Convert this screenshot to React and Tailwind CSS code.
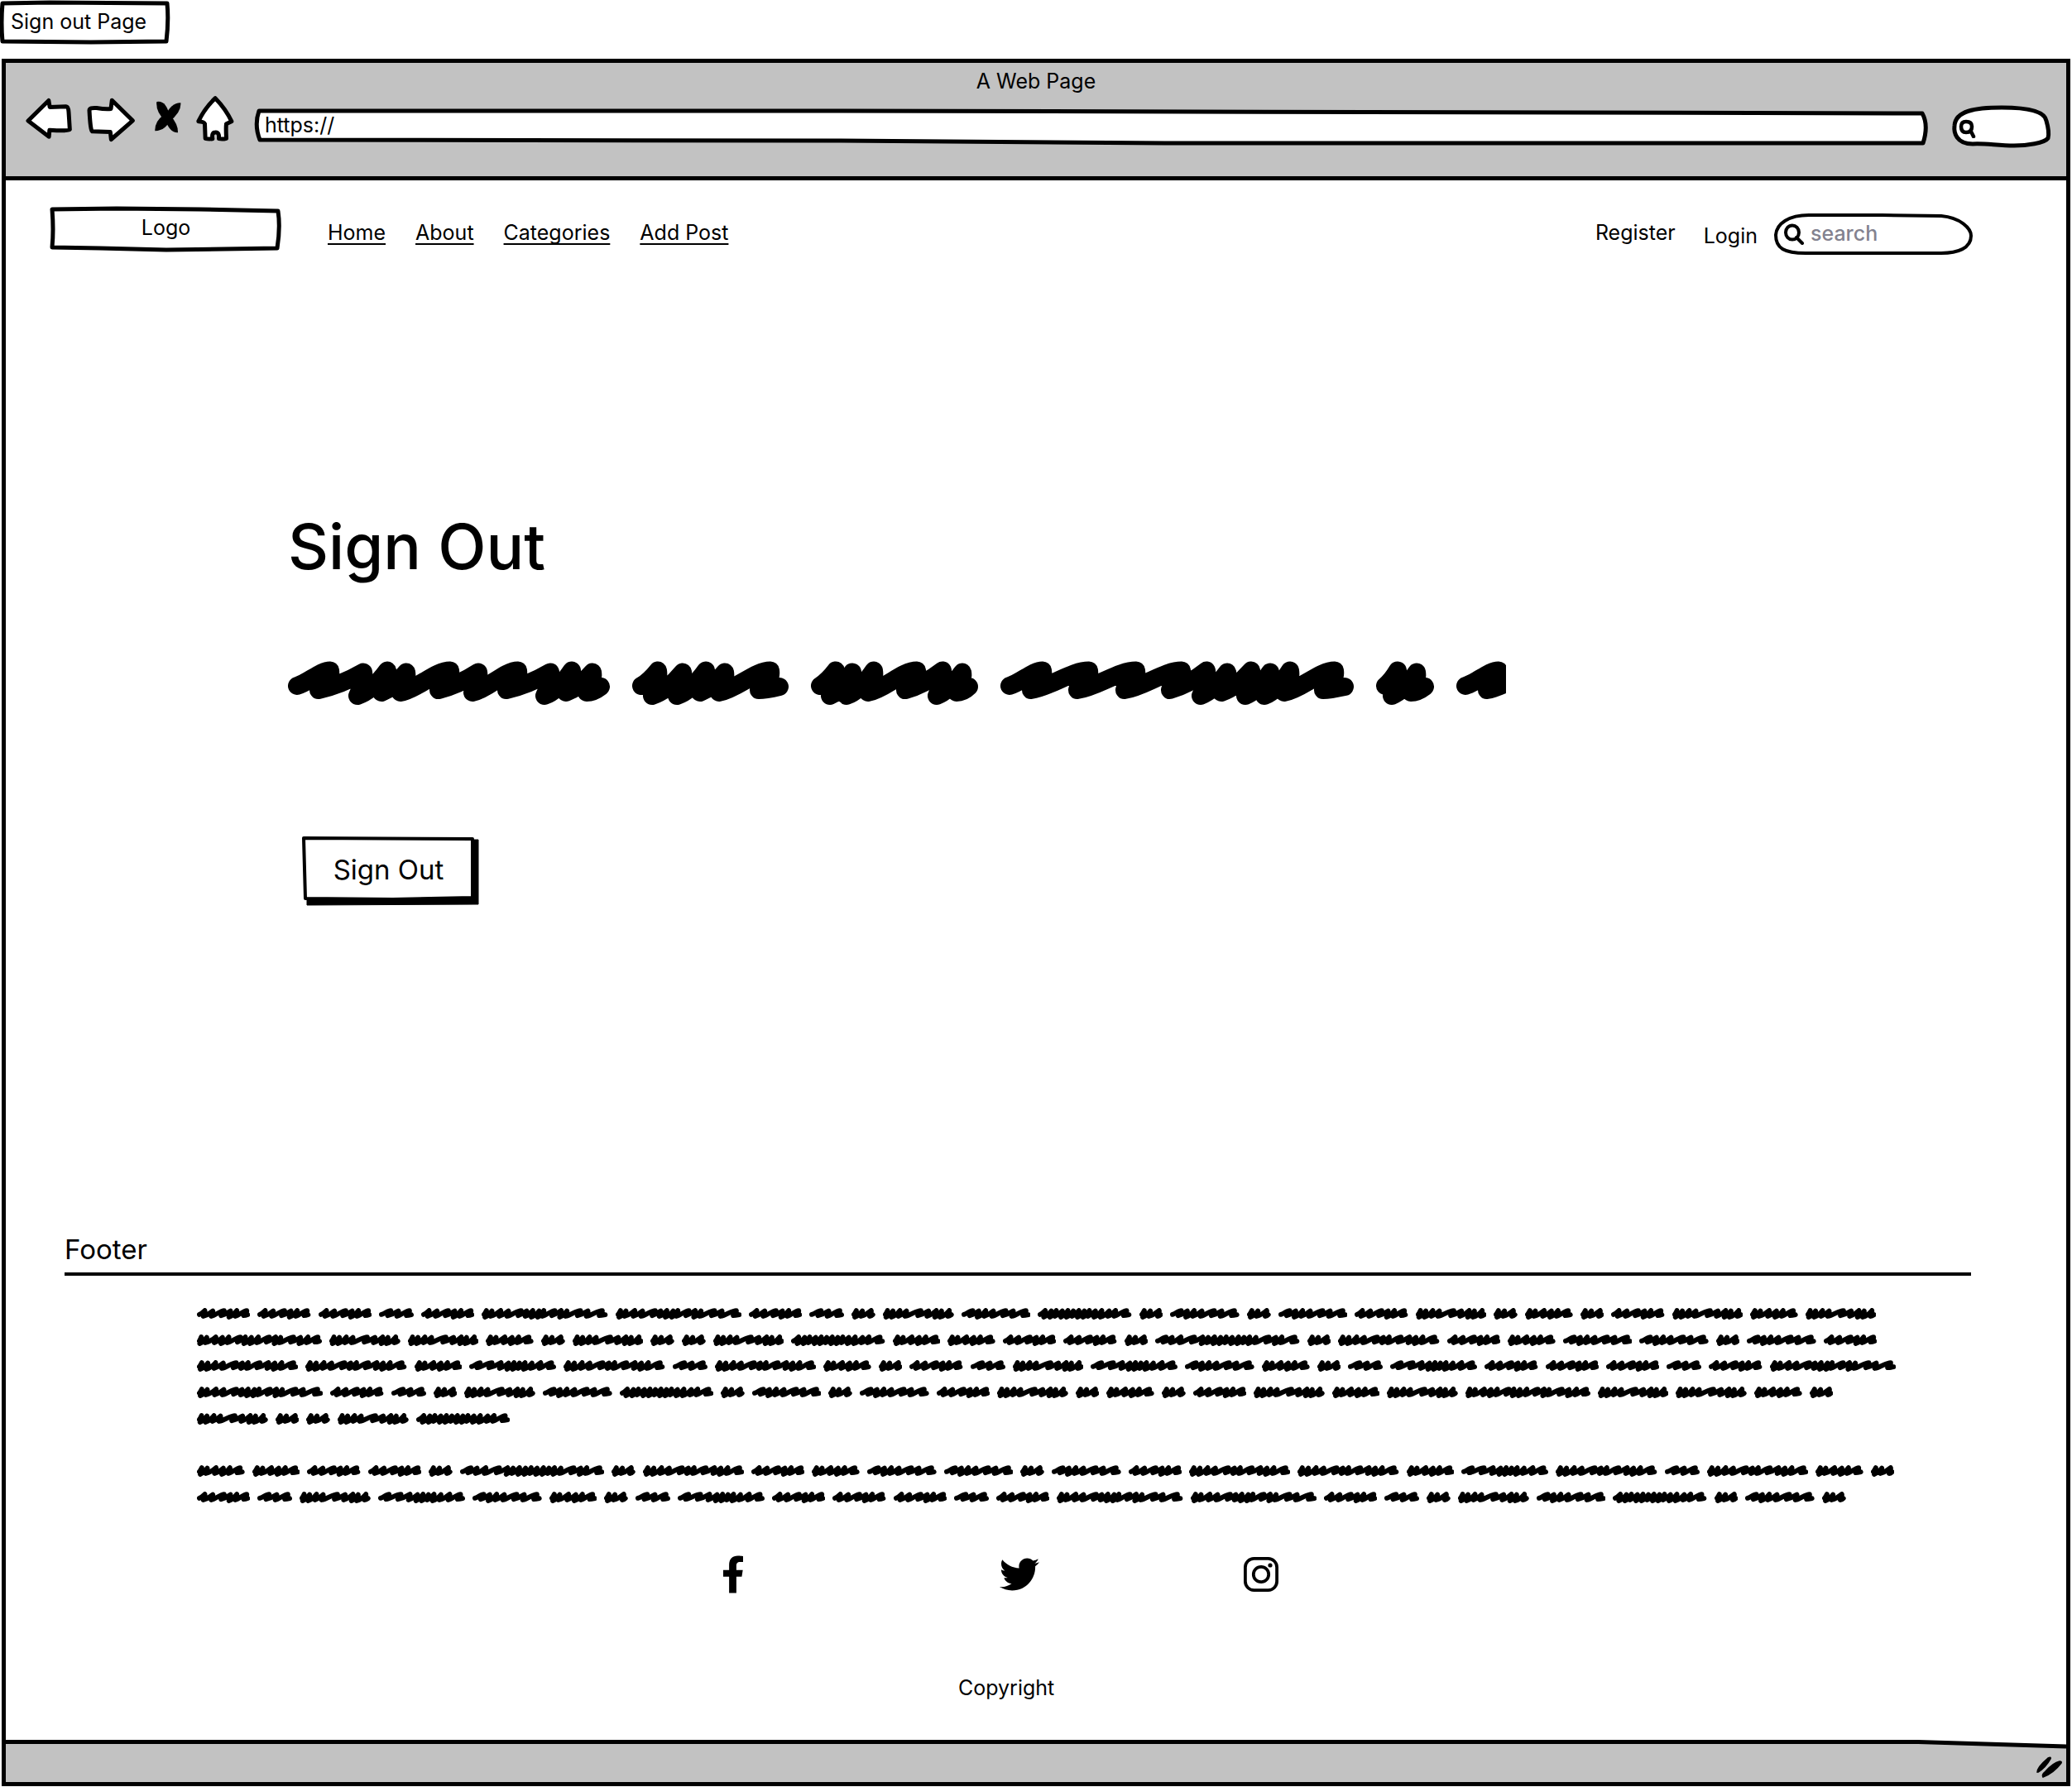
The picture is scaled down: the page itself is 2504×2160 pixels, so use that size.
import React from "react";
import { FaFacebookF, FaTwitter } from "react-icons/fa";

/* ---------- scribbled placeholder words ---------- */

// Horizontal positions of the pen's peaks within each word.
const SMALL = {
  A: [193, [31, 60, 101, 124, 147, 183]],
  B: [126, [45, 73, 113]],
  C: [457, [20, 40, 72, 100, 146, 166, 188, 211, 228, 268, 291, 312, 361, 388, 440]],
  D: [86, [20, 42, 74]],
  E: [257, [19, 39, 64, 88, 140, 168, 196, 215, 243]],
  F: [251, [43, 65, 90, 118, 163, 190, 236]],
  G: [340, [30, 52, 70, 92, 112, 132, 152, 172, 190, 212, 235, 262, 285, 325]],
  H: [173, [20, 40, 72, 98, 122, 159]],
  J: [453, [18, 38, 71, 95, 118, 160, 178, 200, 225, 265, 288, 306, 353, 378, 405, 441]],
  K: [523, [42, 64, 96, 145, 175, 195, 218, 240, 260, 282, 305, 325, 345, 368, 415, 440, 462, 509]],
  L: [367, [20, 42, 70, 98, 145, 167, 188, 231, 262, 285, 310, 353]],
  M: [315, [42, 85, 118, 145, 165, 185, 205, 230, 262, 301]],
};

const BIG = [
  [389, [54, 94, 123, 146, 199, 233, 281, 320, 346, 371]],
  [189, [34, 64, 92, 115, 170]],
  [202, [33, 53, 79, 131, 162, 186]],
  [427, [54, 110, 167, 222, 252, 277, 306, 329, 353, 407]],
  [70, [29, 52]],
  [120, [54, 105]],
];

const ROWS = [
  "AAABACCABDEFGDFDFAEDHDAEHE",
  "JEEHDEDDEGHHAADKDLAHFFDFA",
  "LLHMLBLHDABEMFHDBMAAABAC",
  "CABDEFGDFDFAEDHDAEHEJEEHD",
  "EDDEG",
  "",
  "HHAADKDLAHFFDFALLHMLBLHD",
  "ABEMFHDBMAAABACCABDEFGDFD",
];

function wordPath(width, peaks, k) {
  const r = 11 * k;
  const top = 11.5 * k;
  let x = r;
  let y = 30 * k;
  let d = `M${x} ${y}`;
  peaks.forEach((peak, i) => {
    const px = Math.min(peak, width - r) - 3 * k;
    const before = peak - (i > 0 ? peaks[i - 1] : 0);
    const after = i + 1 < peaks.length ? peaks[i + 1] - peak : 99;
    const steep = before < 42 * k;
    const tight = after < 36 * k;
    const vx = Math.max(px - (steep ? 7 : 14) * k, r);
    const vy = (steep && tight && i % 3 !== 2 ? 42 : steep ? 38 : 35) * k;
    const dx = px - x;
    if (steep) {
      d += ` Q${x + dx * 0.5} ${y - 6 * k} ${px} ${top + (i % 2) * 2 * k}`;
    } else {
      d += ` C${x + dx * 0.35} ${y - 4 * k} ${px - dx * 0.3} ${top} ${px} ${top}`;
    }
    d += ` Q${px + 2 * k} ${top + 12 * k} ${vx} ${vy}`;
    x = vx;
    y = vy;
  });
  d += ` Q${x + 8 * k} ${y} ${width - r} ${31 * k}`;
  return d;
}

function Word({ width, peaks, k, scale, className }) {
  return (
    <svg
      className={className}
      width={width / scale}
      height={(54 * k) / scale}
      viewBox={`0 0 ${width} ${54 * k}`}
      fill="none"
      stroke="black"
      strokeWidth={22 * k}
      strokeLinecap="round"
      strokeLinejoin="round"
      aria-hidden="true"
    >
      <path d={wordPath(width, peaks, k)} />
    </svg>
  );
}

/* ---------- hand-drawn frame behind a box ---------- */

function Frame({ w, h, d, fill = "white", stroke = 5 }) {
  return (
    <svg
      className="pointer-events-none absolute inset-0 -z-10 size-full overflow-visible"
      viewBox={`0 0 ${w} ${h}`}
      preserveAspectRatio="none"
      aria-hidden="true"
    >
      <path d={d} fill={fill} stroke="black" strokeWidth={stroke} strokeLinejoin="round" vectorEffect="non-scaling-stroke" />
    </svg>
  );
}

/* ---------- browser toolbar icons ---------- */

function Outline({ box, className, d }) {
  return (
    <svg viewBox={box} className={className} fill="white" stroke="black" strokeWidth="15" strokeLinejoin="round" aria-hidden="true">
      <path d={d} />
    </svg>
  );
}

function Chrome() {
  return (
    <header className="flex h-[142px] flex-col border-b-[5px] border-black bg-[#c2c2c2]">
      <p className="pt-1 text-center text-[25px] leading-9">A Web Page</p>
      <div className="flex items-start pr-[18px] pl-6">
        <button type="button" aria-label="Back" className="mt-[2px]">
          <Outline
            box="93 352 169 153"
            className="h-[51px] w-14"
            d="M102 436 L177 362 L181 386 L240 384 Q249 385 250 405 L254 468 Q252 474 180 470 L178 494 Z"
          />
        </button>
        <button type="button" aria-label="Forward" className="mt-[2px] ml-[18px]">
          <Outline
            box="315 352 174 161"
            className="h-[54px] w-[58px]"
            d="M324 398 Q324 387 350 389 Q385 395 402 392 L406 361 L481 435 L403 503 L400 476 L334 474 Q328 472 324 398 Z"
          />
        </button>
        <button type="button" aria-label="Stop" className="mt-[6px] ml-6">
          <svg viewBox="563 364 97 118" className="h-[39px] w-8" aria-hidden="true">
            <path d="M600 436 Q566 402 570 367 Q606 360 618 422 Z" />
            <path d="M600 420 Q624 370 658 371 Q661 406 616 440 Z" />
            <path d="M596 424 L618 414 Q650 450 648 480 Q618 482 600 430 Z" />
            <path d="M596 415 L620 430 Q606 472 564 474 Q562 440 596 415 Z" />
          </svg>
        </button>
        <button type="button" aria-label="Home page" className="ml-[18px]">
          <Outline
            box="711 348 137 165"
            className="h-[55px] w-[46px]"
            d="M780 356 Q818 395 839 440 L820 449 Q818 460 820 502 Q806 506 793 503 Q795 478 780 480 Q766 480 770 503 Q756 505 744 502 L742 449 Q740 441 719 440 Q742 392 780 356 Z"
          />
        </button>
        <label className="relative isolate mt-[15px] ml-[25px] flex h-[45px] flex-1">
          <Frame w={2022} h={45} d="M5 3 L700 3 L2015 6 Q2023 20 2016 42 L1100 42 L700 39 L6 38 Q-1 20 5 3 Z" />
          <input
            aria-label="Address"
            defaultValue="https://"
            className="h-10 w-full bg-transparent px-3 text-[25px] outline-none"
          />
        </label>
        <label className="relative isolate mt-3 ml-[29px] flex h-[50px] w-[120px]">
          <Frame
            w={120}
            h={50}
            d="M25 46 C5 46 2 32 3 24 C4 6 28 2 60 2 C85 2 112 5 114 18 Q118 32 116 39 C112 45 90 48 75 48 C55 48 40 45 25 46 Z"
          />
          <svg viewBox="0 0 24 24" className="mt-[15px] ml-2 size-6" fill="none" stroke="black" strokeWidth="4.5" strokeLinecap="round" aria-hidden="true">
            <path d="M3 10 Q3 4 9 4 Q16 4 16 10 Q16 17 9 17 Q3 17 3 10 Z M15 16 L18 22" />
          </svg>
          <input aria-label="Search the web" className="w-16 min-w-0 bg-transparent outline-none" />
        </label>
      </div>
    </header>
  );
}

function Nav() {
  const link = "underline decoration-2 underline-offset-[4px] [text-decoration-skip-ink:none]";
  return (
    <nav className="flex items-start pt-8 pr-[113px] pl-[54px] text-[25px] leading-9">
      <a href="#logo" className="relative isolate flex h-[53px] w-[279px] justify-center pt-[7px]">
        <Frame w={279} h={53} d="M2 3 L80 2 L180 3 L275 5 Q278 25 274 50 L140 52 L60 50 L2 49 Q4 28 2 3 Z" />
        Logo
      </a>
      <div className="flex gap-9 pt-[13px] pl-14">
        <a href="#home" className={link}>Home</a>
        <a href="#about" className={link}>About</a>
        <a href="#categories" className={link}>Categories</a>
        <a href="#add" className={link}>Add Post</a>
      </div>
      <a href="#register" className="mt-[13px] ml-auto">Register</a>
      <a href="#login" className="mt-[17px] ml-[34px]">Login</a>
      <label className="relative isolate mt-2 ml-5 flex h-[50px] w-60">
        <Frame
          w={240}
          h={50}
          stroke={4}
          d="M42 2 L130 2 L202 3 C225 5 238 18 238 27 C238 42 222 48 202 48 L38 48 C12 48 2 42 2 26 C3 12 18 2 42 2 Z"
        />
        <svg viewBox="0 0 26 26" className="mt-3 ml-3 size-[26px]" fill="none" stroke="black" strokeWidth="4" strokeLinecap="round" aria-hidden="true">
          <ellipse cx="10" cy="11" rx="8" ry="8.5" />
          <path d="M15 17 L22 24" />
        </svg>
        <input
          type="search"
          aria-label="Search"
          placeholder="search"
          className="h-12 w-40 bg-transparent pl-1.5 text-[25px] font-medium outline-none placeholder:text-[#83828f]"
        />
      </label>
    </nav>
  );
}

function Footer() {
  return (
    <footer className="mt-[396px] pr-[115px] pl-[71px]">
      <h2 className="text-[33px] leading-10">Footer</h2>
      <hr className="mt-2 border-t-4 border-black" />
      <div className="mt-[39px] flex h-[236px] flex-col justify-between pl-40" role="img" aria-label="Placeholder text">
        {ROWS.map((row, i) => (
          <div key={i} className="flex h-3.5 gap-[9px]">
            {[...row].map((c, j) => (
              <Word key={j} width={SMALL[c][0]} peaks={SMALL[c][1]} k={0.79} scale={3} className="shrink-0" />
            ))}
          </div>
        ))}
      </div>
      <div className="mt-[62px] flex h-12 items-center pl-[794px]">
        <a href="#facebook" aria-label="Facebook" className="w-[26px]">
          <FaFacebookF className="h-12 w-7" />
        </a>
        <a href="#twitter" aria-label="Twitter" className="ml-[310px]">
          <FaTwitter className="size-12" />
        </a>
        <a href="#instagram" aria-label="Instagram" className="ml-[247px]">
          <svg viewBox="0 0 42 42" className="size-[42px]" fill="none" stroke="black" strokeWidth="3.8" aria-hidden="true">
            <rect x="1.9" y="1.9" width="38.2" height="38.2" rx="10.5" />
            <circle cx="21" cy="21" r="9.2" />
            <circle cx="32" cy="10" r="2.6" fill="black" stroke="none" />
          </svg>
        </a>
      </div>
      <p className="mt-[95px] pl-[1080px] text-[25px] leading-9">Copyright</p>
    </footer>
  );
}

export default function App() {
  return (
    <div className="flex min-h-screen flex-col bg-white pb-px font-['Inter',sans-serif] text-black">
      <div className="relative isolate h-[53px] w-[205px] pt-2 pl-[13px] text-[25px] leading-9">
        <Frame w={205} h={53} d="M3 4 L60 3 L202 4 Q204 25 201 50 L110 51 L3 50 Q1 28 3 4 Z" />
        Sign out Page
      </div>
      <div className="mx-[2px] mt-[18px] flex flex-1 flex-col border-[5px] border-black">
        <Chrome />
        <div className="flex flex-1 flex-col">
          <Nav />
          <main className="mt-[314px] pl-[341px]">
            <h1 className="text-[76px] leading-[76px] font-medium">Sign Out</h1>
            <div className="mt-[101px] flex w-[1472px] gap-[27px] overflow-hidden" role="img" aria-label="Placeholder sentence">
              {BIG.map(([width, peaks], i) => (
                <Word key={i} width={width} peaks={peaks} k={1} scale={1} className="shrink-0" />
              ))}
            </div>
            <button
              type="button"
              className="relative isolate mt-[158px] ml-[17px] flex h-[83px] w-[213px] justify-center pt-5 pr-1 text-[33px] leading-10"
            >
              <Frame w={213} h={83} stroke={1} fill="black" d="M6 4 L213 4 L213 82 L6 83 Z" />
              <Frame w={213} h={83} stroke={4} d="M2 2 L206 3 L206 74 L110 76 L4 75 Z" />
              Sign Out
            </button>
          </main>
          <Footer />
        </div>
        <div className="relative isolate flex h-[51px] items-start justify-end bg-[#c2c2c2] pt-5 pr-1">
          <svg className="absolute inset-x-0 top-0 h-3 w-full" viewBox="0 0 2490 12" preserveAspectRatio="none" aria-hidden="true">
            <path d="M0 0 H2490 V8 L2311 2 H0 Z" fill="white" />
            <path d="M0 2.5 H2311 L2490 8" fill="none" stroke="black" strokeWidth="5" />
          </svg>
          <svg viewBox="0 0 32 26" className="h-[26px] w-8" stroke="black" strokeWidth="1.5" aria-hidden="true">
            <path d="M1 19 Q1 13 14 2 Q18 0 17 3 Q11 14 2 19 Z" />
            <path d="M8 25 Q6 22 11 18 Q20 8 28 6 Q31 6 30 8 Q21 20 8 25 Z" />
          </svg>
        </div>
      </div>
    </div>
  );
}
